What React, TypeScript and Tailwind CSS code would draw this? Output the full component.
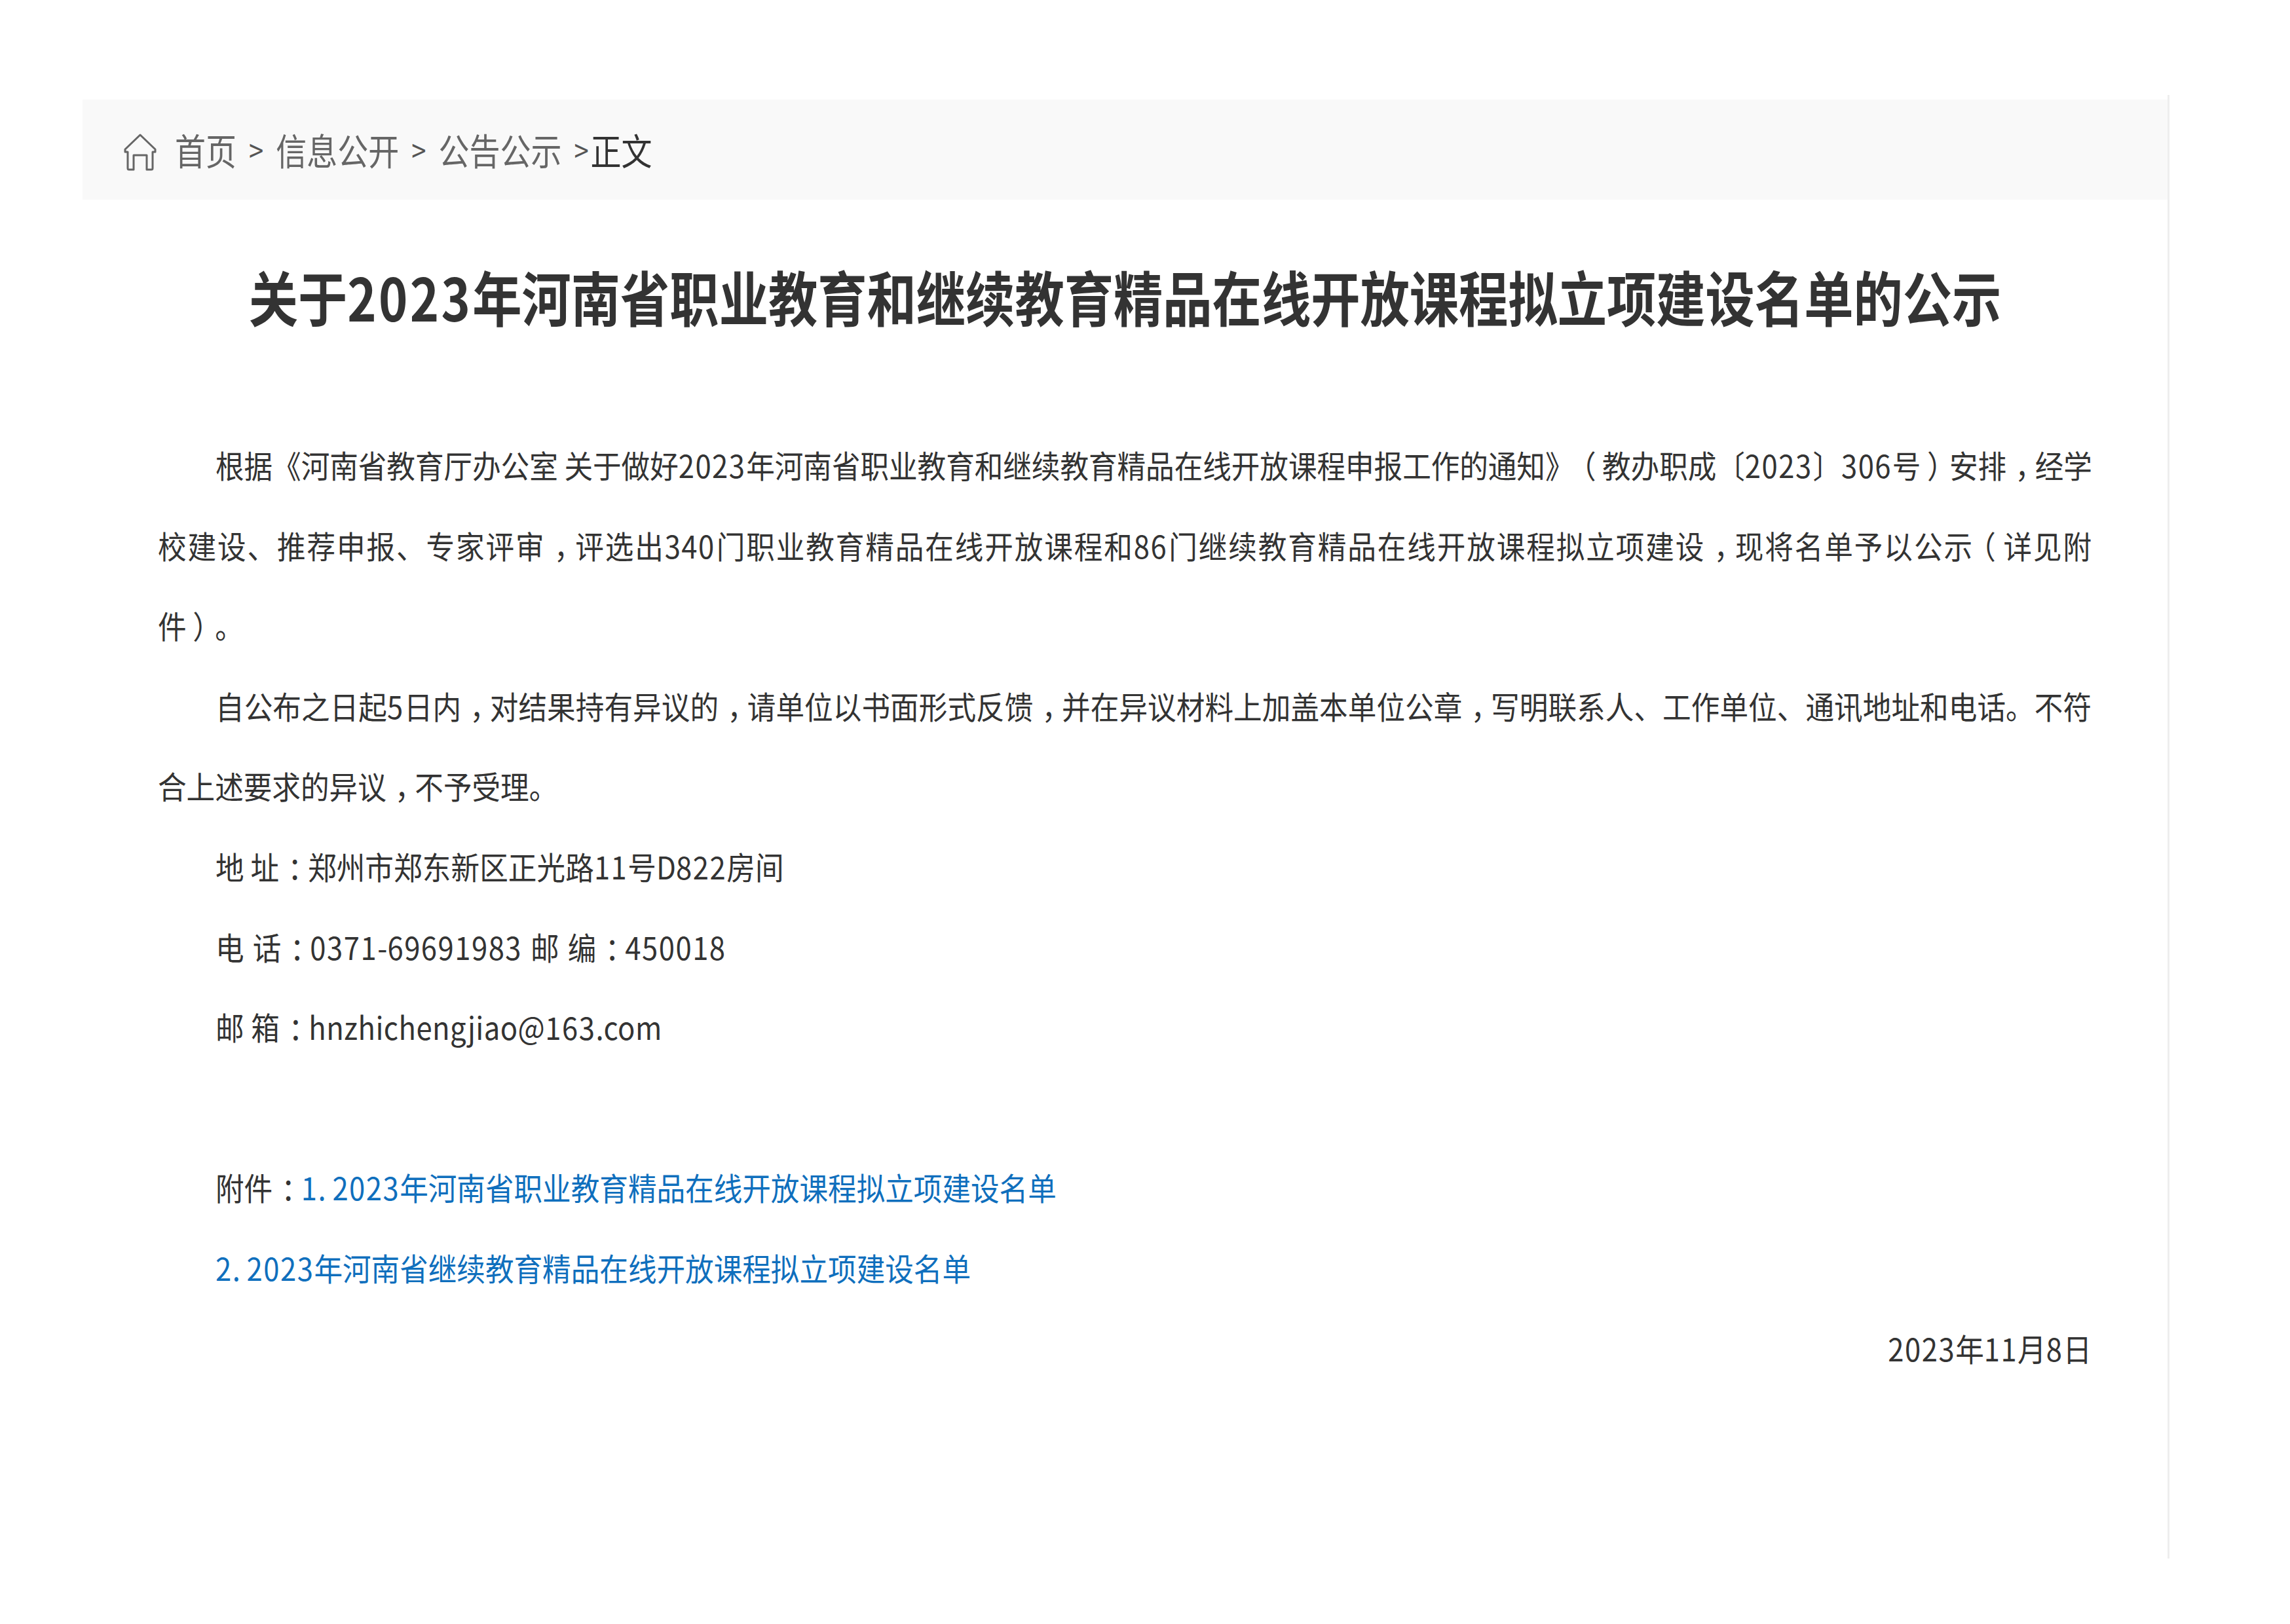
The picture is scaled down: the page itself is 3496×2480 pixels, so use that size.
const bodyFont = "font-['Noto_Sans_CJK_SC','Noto_Sans',sans-serif]";

// the source font centres these marks in their em box, Noto pushes them to one side
const markClass: Record<string, string> = {
  '，': 'inline-block indent-0 translate-x-[0.3em]',
  '：': 'inline-block indent-0 translate-x-[0.3em]',
  '（': 'inline-block indent-0 -translate-x-[0.22em]',
  '）': 'inline-block indent-0 translate-x-[0.22em]',
};

const T = ({ children }: { children: string }) => (
  <>
    {children.split(/([，：（）]|\d+)/).map((part, i) =>
      markClass[part] ? (
        <span key={i} className={markClass[part]}>{part}</span>
      ) : /^\d+$/.test(part) ? (
        <span key={i} className="tracking-[1.5px]">{part}</span>
      ) : (
        part
      )
    )}
  </>
);

// one row of the notice text; glyphs in the source run taller than they are wide
const Line = ({ children, indent = false, justify = false, right = false, tight = false, className = '' }: { children?: React.ReactNode; indent?: boolean; justify?: boolean; right?: boolean; tight?: boolean; className?: string }) => (
  <p
    className={`h-[122.6px] leading-[122.6px] scale-y-[1.1] [text-spacing-trim:space-all] ${indent ? 'indent-[88px]' : ''} ${justify ? 'text-justify [text-align-last:justify]' : 'whitespace-nowrap'} ${right ? 'text-right' : ''} ${tight ? 'tracking-[-0.8px]' : ''} ${className}`}
  >
    {children}
  </p>
);

const Link = ({ children }: { children: string }) => (
  <a href="#" className="text-[#0f6fbd]"><T>{children}</T></a>
);

const Sep = () => <span className="mx-[19px] text-[40px] text-[#555555]">&gt;</span>;

const App = () => {
  return (
    <div className={`${bodyFont} min-h-[2480px] bg-white pt-[145px] pl-[126px]`}>
      <div className="w-[3186px] h-[2235px] border-r-[3px] border-[#eeeeee] pt-[7px]">
        {/* Breadcrumb */}
        <div className="h-[153px] bg-[#f9f9f9] flex items-center pl-[63px] text-[47px] text-[#666666] whitespace-nowrap">
          <svg width="50" height="57" viewBox="0 0 50 57" fill="none" stroke="#666666" strokeWidth="3" strokeLinejoin="round" className="shrink-0 mr-[28px] mt-[8px]">
            <path d="M25 2 L48 24 L48 28 L44 28 L44 53 Q44 55 42 55 L35 55 L35 33 L15 33 L15 55 L8 55 Q6 55 6 53 L6 28 L2 28 L2 24 Z" />
          </svg>
          <div className="flex items-center scale-y-[1.18]">
            <span>首页</span>
            <Sep />
            <span>信息公开</span>
            <Sep />
            <span>公告公示</span>
            <span className="ml-[19px] mr-[3px] text-[40px] text-[#555555]">&gt;</span>
            <span className="text-[#333333]">正文</span>
          </div>
        </div>

        {/* Title */}
        <h1 className="h-[296px] mb-[47px] flex items-center justify-center text-[75.3px] font-bold text-[#333333] whitespace-nowrap">
          <span className="scale-y-[1.2]">关于<span className="tracking-[3.3px]">2023</span>年河南省职业教育和继续教育精品在线开放课程拟立项建设名单的公示</span>
        </h1>

        {/* Body */}
        <div className="pl-[115px] pr-[116px] text-[43.6px] text-[#333333]">
          <Line indent justify tight><T>根据《河南省教育厅办公室 关于做好2023年河南省职业教育和继续教育精品在线开放课程申报工作的通知》（教办职成〔2023〕306号）安排，经学</T></Line>
          <Line justify><T>校建设、推荐申报、专家评审，评选出340门职业教育精品在线开放课程和86门继续教育精品在线开放课程拟立项建设，现将名单予以公示（详见附</T></Line>
          <Line><T>件）。</T></Line>
          <Line indent justify><T>自公布之日起5日内，对结果持有异议的，请单位以书面形式反馈，并在异议材料上加盖本单位公章，写明联系人、工作单位、通讯地址和电话。不符</T></Line>
          <Line><T>合上述要求的异议，不予受理。</T></Line>
          <Line indent className="tracking-[0.1px]"><T>地 址：郑州市郑东新区正光路11号D822房间</T></Line>
          <Line indent className="[word-spacing:3px] tracking-[0.2px]"><T>电 话：0371-69691983 邮 编：450018</T></Line>
          <Line indent className="tracking-[0.45px]"><T>邮 箱：hnzhichengjiao@163.com</T></Line>
          <Line />
          <Line indent><T>附件：</T><Link>1. 2023年河南省职业教育精品在线开放课程拟立项建设名单</Link></Line>
          <Line indent><Link>2. 2023年河南省继续教育精品在线开放课程拟立项建设名单</Link></Line>
          <Line right><T>2023年11月8日</T></Line>
        </div>
      </div>
    </div>
  );
};

export default App;
